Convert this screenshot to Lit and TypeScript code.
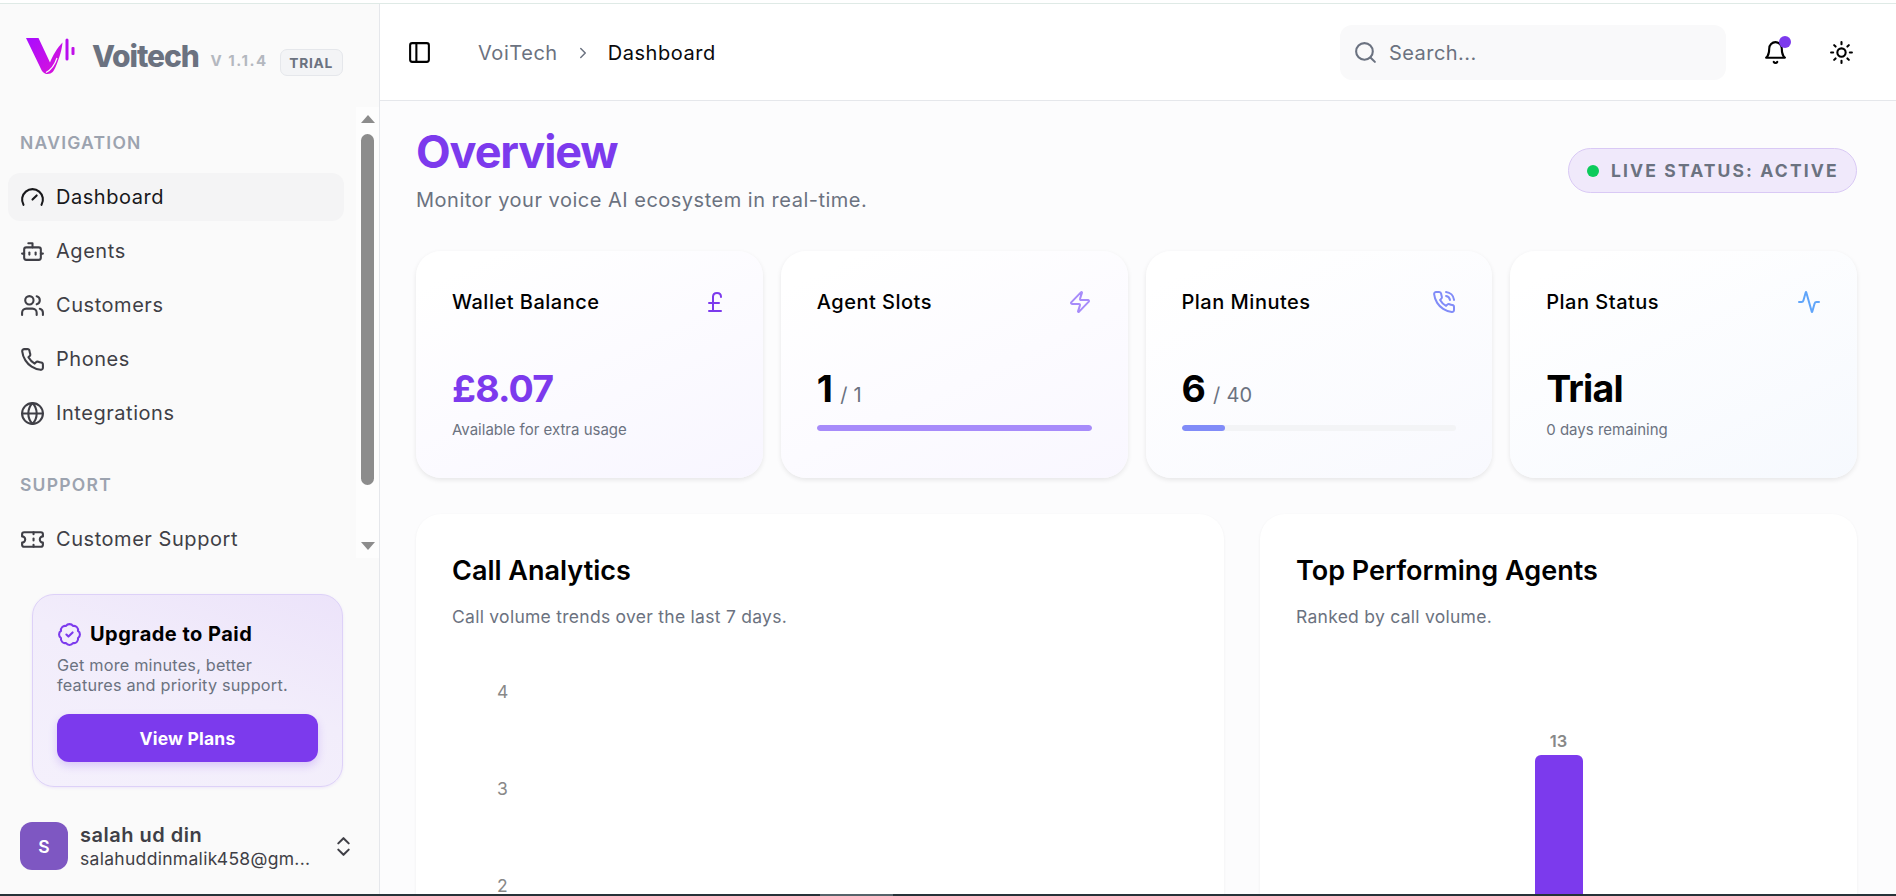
import { LitElement, css, html, svg } from "lit";
import { customElement } from "lit/decorators.js";

const icon = (body: unknown, size = 25, sw = 2) =>
  html`<svg class="ic" width=${size} height=${size} viewBox="0 0 24 24" fill="none" stroke="currentColor" stroke-width=${sw} stroke-linecap="round" stroke-linejoin="round">${body}</svg>`;

const icons = {
  gauge: svg`<path d="m12 14 4-4"/><path d="M3.34 19a10 10 0 1 1 17.32 0"/>`,
  bot: svg`<path d="M12 8V4H8"/><rect width="16" height="12" x="4" y="8" rx="2"/><path d="M2 14h2"/><path d="M20 14h2"/><path d="M15 13v2"/><path d="M9 13v2"/>`,
  users: svg`<path d="M16 21v-2a4 4 0 0 0-4-4H6a4 4 0 0 0-4 4v2"/><circle cx="9" cy="7" r="4"/><path d="M22 21v-2a4 4 0 0 0-3-3.87"/><path d="M16 3.13a4 4 0 0 1 0 7.75"/>`,
  phone: svg`<path d="M22 16.92v3a2 2 0 0 1-2.18 2 19.79 19.79 0 0 1-8.63-3.07 19.5 19.5 0 0 1-6-6 19.79 19.79 0 0 1-3.07-8.67A2 2 0 0 1 4.11 2h3a2 2 0 0 1 2 1.72 12.84 12.84 0 0 0 .7 2.81 2 2 0 0 1-.45 2.11L8.09 9.91a16 16 0 0 0 6 6l1.27-1.27a2 2 0 0 1 2.11-.45 12.84 12.84 0 0 0 2.81.7A2 2 0 0 1 22 16.92z"/>`,
  globe: svg`<circle cx="12" cy="12" r="10"/><path d="M12 2a14.5 14.5 0 0 0 0 20 14.5 14.5 0 0 0 0-20"/><path d="M2 12h20"/>`,
  ticket: svg`<path d="M2 9a3 3 0 0 1 0 6v2a2 2 0 0 0 2 2h16a2 2 0 0 0 2-2v-2a3 3 0 0 1 0-6V7a2 2 0 0 0-2-2H4a2 2 0 0 0-2 2Z"/><path d="M13 5v2"/><path d="M13 17v2"/><path d="M13 11v2"/>`,
  badge: svg`<path d="M3.85 8.62a4 4 0 0 1 4.78-4.77 4 4 0 0 1 6.74 0 4 4 0 0 1 4.78 4.78 4 4 0 0 1 0 6.74 4 4 0 0 1-4.77 4.78 4 4 0 0 1-6.75 0 4 4 0 0 1-4.78-4.77 4 4 0 0 1 0-6.76Z"/><path d="m9 12 2 2 4-4"/>`,
  updown: svg`<path d="m7 15 5 5 5-5"/><path d="m7 9 5-5 5 5"/>`,
  panel: svg`<rect width="18" height="18" x="3" y="3" rx="2"/><path d="M9 3v18"/>`,
  chevron: svg`<path d="m9 18 6-6-6-6"/>`,
  search: svg`<circle cx="11" cy="11" r="8"/><path d="m21 21-4.3-4.3"/>`,
  bell: svg`<path d="M6 8a6 6 0 0 1 12 0c0 7 3 9 3 9H3s3-2 3-9"/><path d="M10.3 21a1.94 1.94 0 0 0 3.4 0"/>`,
  sun: svg`<circle cx="12" cy="12" r="4"/><path d="M12 2v2"/><path d="M12 20v2"/><path d="m4.93 4.93 1.41 1.41"/><path d="m17.66 17.66 1.41 1.41"/><path d="M2 12h2"/><path d="M20 12h2"/><path d="m6.34 17.66-1.41 1.41"/><path d="m19.07 4.93-1.41 1.41"/>`,
  pound: svg`<path d="M18 7c0-5.333-8-5.333-8 0"/><path d="M10 7v14"/><path d="M6 21h12"/><path d="M6 13h10"/>`,
  zap: svg`<path d="M4 14a1 1 0 0 1-.78-1.63l9.9-10.2a.5.5 0 0 1 .86.46l-1.92 6.02A1 1 0 0 0 13 10h7a1 1 0 0 1 .78 1.63l-9.9 10.2a.5.5 0 0 1-.86-.46l1.92-6.02A1 1 0 0 0 11 14z"/>`,
  phoneCall: svg`<path d="M22 16.92v3a2 2 0 0 1-2.18 2 19.79 19.79 0 0 1-8.63-3.07 19.5 19.5 0 0 1-6-6 19.79 19.79 0 0 1-3.07-8.67A2 2 0 0 1 4.11 2h3a2 2 0 0 1 2 1.72 12.84 12.84 0 0 0 .7 2.81 2 2 0 0 1-.45 2.11L8.09 9.91a16 16 0 0 0 6 6l1.27-1.27a2 2 0 0 1 2.11-.45 12.84 12.84 0 0 0 2.81.7A2 2 0 0 1 22 16.92z"/><path d="M14.05 2a9 9 0 0 1 8 7.94"/><path d="M14.05 6A5 5 0 0 1 18 10"/>`,
  activity: svg`<path d="M22 12h-2.48a2 2 0 0 0-1.93 1.46l-2.35 8.36a.25.25 0 0 1-.48 0L9.24 2.18a.25.25 0 0 0-.48 0l-2.35 8.36A2 2 0 0 1 4.49 12H2"/>`,
};

const mainNav = [
  { label: "Dashboard", ic: icons.gauge, active: true },
  { label: "Agents", ic: icons.bot },
  { label: "Customers", ic: icons.users },
  { label: "Phones", ic: icons.phone },
  { label: "Integrations", ic: icons.globe },
];

type Stat = {
  title: string;
  ic: unknown;
  color: string;
  tint: string;
  value: string;
  valueClass?: string;
  of?: string;
  note?: string;
  bar?: number;
};

const stats: Stat[] = [
  { title: "Wallet Balance", ic: icons.pound, color: "#7c3aed", tint: "#f8f6ff", value: "£8.07", valueClass: "purple", note: "Available for extra usage" },
  { title: "Agent Slots", ic: icons.zap, color: "#a78bfa", tint: "#f9f7ff", value: "1", of: "/ 1", bar: 100 },
  { title: "Plan Minutes", ic: icons.phoneCall, color: "#818cf8", tint: "#f8f9fe", value: "6", of: "/ 40", bar: 16 },
  { title: "Plan Status", ic: icons.activity, color: "#60a5fa", tint: "#f6f9fe", value: "Trial", note: "0 days remaining" },
];

@customElement("app-root")
export class AppRoot extends LitElement {
  static styles = css`
    :host {
      display: flex;
      flex-direction: column;
      height: 896px;
      overflow: hidden;
      font-family: Inter, "Liberation Sans", sans-serif;
      color: #000;
      background: #fff;
    }
    .ic {
      flex: none;
      display: block;
    }
    .topline {
      height: 3px;
      border-bottom: 1px solid #dfeae6;
      flex: none;
    }
    .taskbar {
      flex: none;
      height: 2px;
      background: #263238;
      display: flex;
      padding-left: 820px;
    }
    .taskbar i {
      width: 73px;
      background: #56636a;
    }
    .app {
      flex: 1;
      min-height: 0;
      display: flex;
    }

    /* sidebar */
    .side {
      width: 379px;
      flex: none;
      box-sizing: content-box;
      background: #fafafa;
      border-right: 1px solid #e5e7eb;
      display: flex;
      flex-direction: column;
    }
    .brand {
      height: 103px;
      flex: none;
      display: flex;
      align-items: center;
      padding-left: 26px;
      box-sizing: border-box;
    }
    .brand svg {
      margin-top: 2px;
    }
    .brand b {
      margin-left: 16px;
      font-size: 30px;
      font-weight: 800;
      color: #6b7280;
      letter-spacing: -1.1px;
    }
    .brand span {
      margin-left: 12px;
      margin-top: 10px;
      font-size: 15px;
      font-weight: 700;
      color: #b4b8bf;
      letter-spacing: 1.5px;
    }
    .brand em {
      margin-left: 12px;
      margin-top: 14px;
      width: 63px;
      height: 27px;
      box-sizing: border-box;
      display: grid;
      place-items: center;
      font-style: normal;
      font-size: 13.75px;
      font-weight: 700;
      letter-spacing: 0.7px;
      color: #6b7280;
      background: #f3f4f6;
      border: 1px solid #e5e7eb;
      border-radius: 7px;
    }
    .navwrap {
      height: 451px;
      flex: none;
      display: flex;
    }
    .nav {
      flex: 1;
      min-width: 0;
      padding: 0 12px 0 8px;
    }
    .group {
      font-size: 17.5px;
      font-weight: 600;
      color: #9ca3af;
      letter-spacing: 1.24px;
      padding-left: 12px;
      height: 21px;
      line-height: 21px;
      margin: 25px 0 20px;
    }
    .group.second {
      margin: 37px 0 20px;
    }
    .item {
      height: 48px;
      margin-bottom: 6px;
      border-radius: 12px;
      display: flex;
      align-items: center;
      gap: 11px;
      padding-left: 12px;
      font-size: 20px;
      letter-spacing: 0.55px;
      color: #3f3f46;
    }
    .item.active {
      background: #f4f4f5;
      color: #18181b;
    }
    .scroll {
      width: 23px;
      flex: none;
      background: #fdfdfd;
      display: flex;
      flex-direction: column;
      align-items: center;
    }
    .arrow {
      width: 0;
      height: 0;
      border-left: 7.5px solid transparent;
      border-right: 7.5px solid transparent;
      margin-top: 8px;
      border-bottom: 8px solid #8c8c8c;
    }
    .arrow.down {
      border-bottom: 0;
      border-top: 8px solid #8c8c8c;
      margin-top: 57px;
    }
    .thumb {
      width: 13px;
      height: 351px;
      margin-top: 11px;
      border-radius: 7px;
      background: #8c8c8c;
    }
    .upgrade {
      margin: 36px 36px 0 32px;
      height: 193px;
      box-sizing: border-box;
      border: 1px solid #ddd1f8;
      border-radius: 22px;
      background: linear-gradient(200deg, #ece3fa 0%, #f2edfb 45%, #f4f0fc 100%);
      box-shadow: 0 1px 3px rgba(124, 58, 237, 0.1);
      padding: 27px 24px 0;
    }
    .up-title {
      display: flex;
      align-items: center;
      gap: 8px;
      font-size: 20px;
      font-weight: 700;
      letter-spacing: 0.48px;
      height: 24px;
      color: #000;
    }
    .up-title .ic {
      color: #7c3aed;
    }
    .upgrade p {
      margin: 9px 0 0;
      font-size: 16.25px;
      line-height: 20px;
      letter-spacing: 0.2px;
      color: #6b7280;
    }
    .upgrade button {
      margin-top: 19px;
      display: block;
      width: 100%;
      height: 48px;
      border: 0;
      border-radius: 12px;
      background: #7c3aed;
      color: #fff;
      font: 700 17.5px Inter, sans-serif;
      letter-spacing: 0.2px;
      box-shadow: 0 4px 8px rgba(124, 58, 237, 0.22);
    }
    .user {
      margin-top: 35px;
      padding: 0 23px 0 20px;
      display: flex;
      align-items: center;
      gap: 12px;
    }
    .avatar {
      width: 48px;
      height: 48px;
      flex: none;
      border-radius: 12px;
      background: #7e57c2;
      color: #fff;
      display: grid;
      place-items: center;
      font-size: 17.5px;
      font-weight: 600;
    }
    .who {
      flex: 1;
      min-width: 0;
      color: #3f3f46;
    }
    .who b {
      display: block;
      font-size: 20px;
      font-weight: 600;
      letter-spacing: 0.5px;
      line-height: 25px;
    }
    .who span {
      display: block;
      font-size: 17.5px;
      letter-spacing: 0.3px;
      line-height: 22px;
      white-space: nowrap;
    }
    .user > .ic {
      color: #3f3f46;
    }

    /* main column */
    .main {
      flex: 1;
      min-width: 0;
      display: flex;
      flex-direction: column;
      background: #fcfcfd;
    }
    .head {
      height: 97px;
      flex: none;
      box-sizing: border-box;
      background: #fff;
      border-bottom: 1px solid #e5e7eb;
      display: flex;
      align-items: center;
      padding: 1px 42px 0 27px;
    }
    .crumb {
      display: flex;
      align-items: center;
      font-size: 20px;
      letter-spacing: 0.55px;
      margin-left: 46px;
      color: #6b7280;
    }
    .crumb .ic {
      margin: 0 16px;
    }
    .crumb b {
      font-weight: 400;
      color: #09090b;
    }
    .search {
      margin-left: auto;
      width: 386px;
      height: 55px;
      border-radius: 12px;
      background: #f9f9fa;
      display: flex;
      align-items: center;
      gap: 11px;
      padding-left: 13px;
      box-sizing: border-box;
      font-size: 20px;
      letter-spacing: 0.45px;
      color: #6b7280;
    }
    .bell {
      margin-left: 37px;
      position: relative;
      color: #000;
    }
    .bell i {
      position: absolute;
      top: -4px;
      right: -3px;
      width: 12px;
      height: 12px;
      border-radius: 50%;
      background: #7c3aed;
    }
    .sun {
      margin-left: 41px;
      color: #000;
    }
    .content {
      flex: 1;
      min-height: 0;
      overflow: hidden;
      padding: 0 39px 0 36px;
    }
    .title-row {
      display: flex;
      justify-content: space-between;
      align-items: flex-start;
      height: 150px;
    }
    h1 {
      margin: 24px 0 0;
      font-size: 45px;
      line-height: 54px;
      font-weight: 700;
      color: #7c3aed;
      letter-spacing: -1.1px;
    }
    .title-row p {
      margin: 7px 0 0;
      font-size: 20px;
      line-height: 28px;
      letter-spacing: 0.5px;
      color: #6b7280;
    }
    .live {
      margin-top: 47px;
      height: 45px;
      width: 289px;
      box-sizing: border-box;
      border: 1px solid #d9c9f5;
      border-radius: 23px;
      background: #f0e9fb;
      display: flex;
      align-items: center;
      padding-left: 18px;
      gap: 12px;
      font-size: 17.5px;
      font-weight: 700;
      letter-spacing: 2.13px;
      color: #6b7280;
    }
    .live i {
      width: 12px;
      height: 12px;
      border-radius: 50%;
      background: #0ccb5b;
    }
    .stats {
      display: grid;
      grid-template-columns: repeat(4, 1fr);
      gap: 18px;
    }
    .stat {
      height: 227px;
      box-sizing: border-box;
      border-radius: 25px;
      padding: 36px;
      box-shadow: 0 2px 5px rgba(0, 0, 0, 0.09);
    }
    .stat-top {
      display: flex;
      justify-content: space-between;
      align-items: center;
      height: 30px;
      font-size: 20px;
      font-weight: 500;
      letter-spacing: 0.5px;
    }
    .value {
      margin-top: 49px;
      height: 46px;
      display: flex;
      align-items: baseline;
      gap: 8px;
      font-size: 37.5px;
      line-height: 46px;
      font-weight: 700;
      letter-spacing: -0.8px;
    }
    .value.purple {
      color: #7c3aed;
    }
    .value small {
      font-size: 20px;
      font-weight: 400;
      letter-spacing: 0.25px;
      color: #6b7280;
    }
    .note {
      margin-top: 8px;
      font-size: 15px;
      line-height: 20px;
      color: #6b7280;
    }
    .track {
      margin-top: 13px;
      height: 6px;
      border-radius: 3px;
      background: #f3f4f6;
      overflow: hidden;
    }
    .track i {
      display: block;
      height: 100%;
      border-radius: 3px;
    }
    .charts {
      margin-top: 36px;
      display: grid;
      grid-template-columns: 808px 597px;
      gap: 36px;
      height: 500px;
    }
    .chart {
      background: #fff;
      border-radius: 25px;
      box-shadow: 0 1px 3px rgba(0, 0, 0, 0.06);
      padding: 42px 36px 0;
      box-sizing: border-box;
    }
    h2 {
      margin: 0;
      font-size: 27px;
      line-height: 30px;
      font-weight: 600;
    }
    .chart p {
      margin: 19px 0 0;
      font-size: 17.5px;
      line-height: 24px;
      letter-spacing: 0.27px;
      color: #6b7280;
    }
    .ticks {
      margin: 52px 0 0 45px;
      display: flex;
      flex-direction: column;
      gap: 75px;
      font-size: 17.5px;
      line-height: 22px;
      color: #888;
    }
    .barcol {
      display: flex;
      flex-direction: column;
      align-items: center;
      margin-top: 102px;
      font-size: 16.5px;
      font-weight: 600;
      line-height: 20px;
      color: #888;
    }
    .barcol i {
      margin-top: 4px;
      width: 48px;
      height: 200px;
      background: #7c3aed;
      border-radius: 6px 6px 0 0;
    }
  `;

  private renderLogo() {
    return html`<svg width="50" height="38" viewBox="0 0 50 38">
      <defs>
        <linearGradient id="lg" x1="0" y1="0" x2="1" y2="1">
          <stop offset="0" stop-color="#a80cff"></stop>
          <stop offset="1" stop-color="#dc14d8"></stop>
        </linearGradient>
      </defs>
      <path fill="url(#lg)" d="M0 0H12.500L24 24.500C26.500 18 31 10 36.500 4.500C36 11 33.500 20 30 28C28 33 26 36 21.500 36C18 36 16 33.500 14.500 30Z"></path>
      <path fill="none" stroke="#fafafa" stroke-width="1.2" d="M20 34.500C25 32 29 26 31 20"></path>
      <rect x="39.500" y="0.500" width="3" height="22" rx="1.500" fill="#b80ef0"></rect>
      <rect x="45.500" y="9" width="3" height="8" rx="1" fill="#c010e8"></rect>
    </svg>`;
  }

  render() {
    return html`
      <div class="topline"></div>
      <div class="app">
        <aside class="side">
          <div class="brand">${this.renderLogo()}<b>Voitech</b><span>V 1.1.4</span><em>TRIAL</em></div>
          <div class="navwrap">
            <div class="nav">
              <div class="group">NAVIGATION</div>
              ${mainNav.map(
                (n) => html`<div class="item ${n.active ? "active" : ""}">${icon(n.ic)}<span>${n.label}</span></div>`
              )}
              <div class="group second">SUPPORT</div>
              <div class="item">${icon(icons.ticket)}<span>Customer Support</span></div>
            </div>
            <div class="scroll">
              <div class="arrow"></div>
              <div class="thumb"></div>
              <div class="arrow down"></div>
            </div>
          </div>
          <div class="upgrade">
            <div class="up-title">${icon(icons.badge)}<span>Upgrade to Paid</span></div>
            <p>Get more minutes, better<br />features and priority support.</p>
            <button>View Plans</button>
          </div>
          <div class="user">
            <div class="avatar">S</div>
            <div class="who"><b>salah ud din</b><span>salahuddinmalik458@gm...</span></div>
            ${icon(icons.updown)}
          </div>
        </aside>
        <div class="main">
          <header class="head">
            ${icon(icons.panel)}
            <div class="crumb">
              <span>VoiTech</span>${icon(icons.chevron, 18)}<b>Dashboard</b>
            </div>
            <div class="search">${icon(icons.search)}<span>Search...</span></div>
            <div class="bell">${icon(icons.bell)}<i></i></div>
            <div class="sun">${icon(icons.sun)}</div>
          </header>
          <div class="content">
            <div class="title-row">
              <div>
                <h1>Overview</h1>
                <p>Monitor your voice AI ecosystem in real-time.</p>
              </div>
              <div class="live"><i></i><span>LIVE STATUS: ACTIVE</span></div>
            </div>
            <div class="stats">
              ${stats.map(
                (s) => html`<div class="stat" style="background: linear-gradient(155deg, #fff 10%, ${s.tint} 100%)">
                  <div class="stat-top"><span>${s.title}</span><span style="color: ${s.color}">${icon(s.ic, 24)}</span></div>
                  <div class="value ${s.valueClass ?? ""}">${s.value}${s.of ? html`<small>${s.of}</small>` : ""}</div>
                  ${s.note ? html`<div class="note">${s.note}</div>` : ""}
                  ${s.bar !== undefined
                    ? html`<div class="track"><i style="width: ${s.bar}%; background: ${s.color}"></i></div>`
                    : ""}
                </div>`
              )}
            </div>
            <div class="charts">
              <section class="chart">
                <h2>Call Analytics</h2>
                <p>Call volume trends over the last 7 days.</p>
                <div class="ticks"><span>4</span><span>3</span><span>2</span></div>
              </section>
              <section class="chart">
                <h2>Top Performing Agents</h2>
                <p>Ranked by call volume.</p>
                <div class="barcol"><span>13</span><i></i></div>
              </section>
            </div>
          </div>
        </div>
      </div>
      <div class="taskbar"><i></i></div>
    `;
  }
}
